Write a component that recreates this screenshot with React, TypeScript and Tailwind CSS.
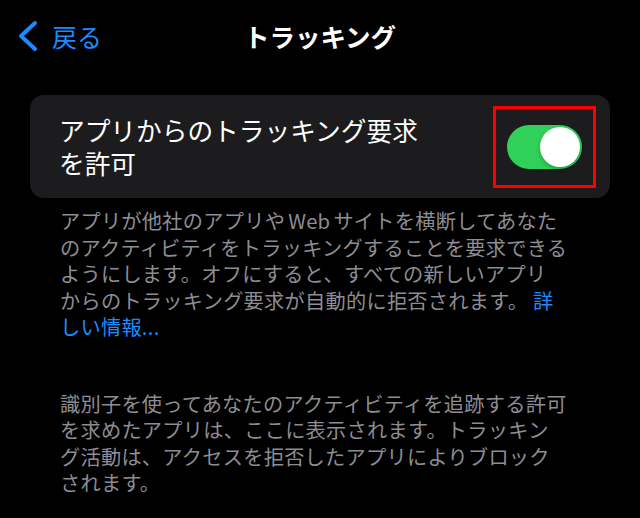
const jp = "font-['Noto_Sans_CJK_JP','Noto_Sans',sans-serif]";

function Toggle() {
  return (
    <div className="border-[3px] border-[#ff0000] w-[103px] h-[82px] flex items-center justify-center">
      <div className="w-[75px] h-[44px] rounded-full bg-[#30d158] flex items-center justify-end pr-[2px]">
        <div className="w-[40px] h-[40px] rounded-full bg-white shadow-[0_2px_4px_rgba(0,0,0,0.25)]" />
      </div>
    </div>
  );
}

export default function App() {
  return (
    <div className={`w-[640px] h-[518px] bg-black overflow-hidden ${jp}`}>
      {/* Nav bar */}
      <div className="relative h-[72px] flex items-center">
        <div className="flex items-center pl-[17px] gap-[14px] text-[#1b8cff]">
          <svg width="21" height="32" viewBox="0 0 21 32" fill="none">
            <path d="M18 3 L4 16 L18 29" stroke="currentColor" strokeWidth="4" strokeLinecap="round" strokeLinejoin="round" />
          </svg>
          <span className="text-[25px] leading-none">戻る</span>
        </div>
        <div className="absolute inset-x-0 top-0 h-[72px] flex items-center justify-center pointer-events-none">
          <span className="text-white text-[25.5px] font-semibold leading-none">トラッキング</span>
        </div>
      </div>

      {/* Card */}
      <div className="mx-[30px] mt-[23px] h-[103px] rounded-[14px] bg-[#1c1c1e] flex items-center justify-between pl-[29px] pr-[14px]">
        <div className="text-white text-[25.7px] leading-[33px] pb-[2px]">
          <div className="whitespace-nowrap">アプリからのトラッキング要求</div>
          <div className="whitespace-nowrap">を許可</div>
        </div>
        <Toggle />
      </div>

      {/* Footer 1 */}
      <div className="px-[60px] pt-[10px] text-[#8d8d93] text-[20.2px] leading-[26.5px] tracking-[0.28px]">
        <div className="whitespace-nowrap">
          アプリが他社のアプリや<span className="mx-[3px]">Web</span>サイトを横断してあなた
        </div>
        <div className="whitespace-nowrap">のアクティビティをトラッキングすることを要求できる</div>
        <div className="whitespace-nowrap">ようにします。オフにすると、すべての新しいアプリ</div>
        <div className="whitespace-nowrap">
          からのトラッキング要求が自動的に拒否されます。 <span className="text-[#1b8cff]">詳</span>
        </div>
        <div className="whitespace-nowrap text-[#1b8cff]">しい情報...</div>
      </div>

      {/* Footer 2 */}
      <div className="px-[60px] pt-[50px] text-[#8d8d93] text-[20.2px] leading-[26.5px] tracking-[0.28px]">
        <div className="whitespace-nowrap">識別子を使ってあなたのアクティビティを追跡する許可</div>
        <div className="whitespace-nowrap">を求めたアプリは、ここに表示されます。トラッキン</div>
        <div className="whitespace-nowrap">グ活動は、アクセスを拒否したアプリによりブロック</div>
        <div className="whitespace-nowrap">されます。</div>
      </div>
    </div>
  );
}
